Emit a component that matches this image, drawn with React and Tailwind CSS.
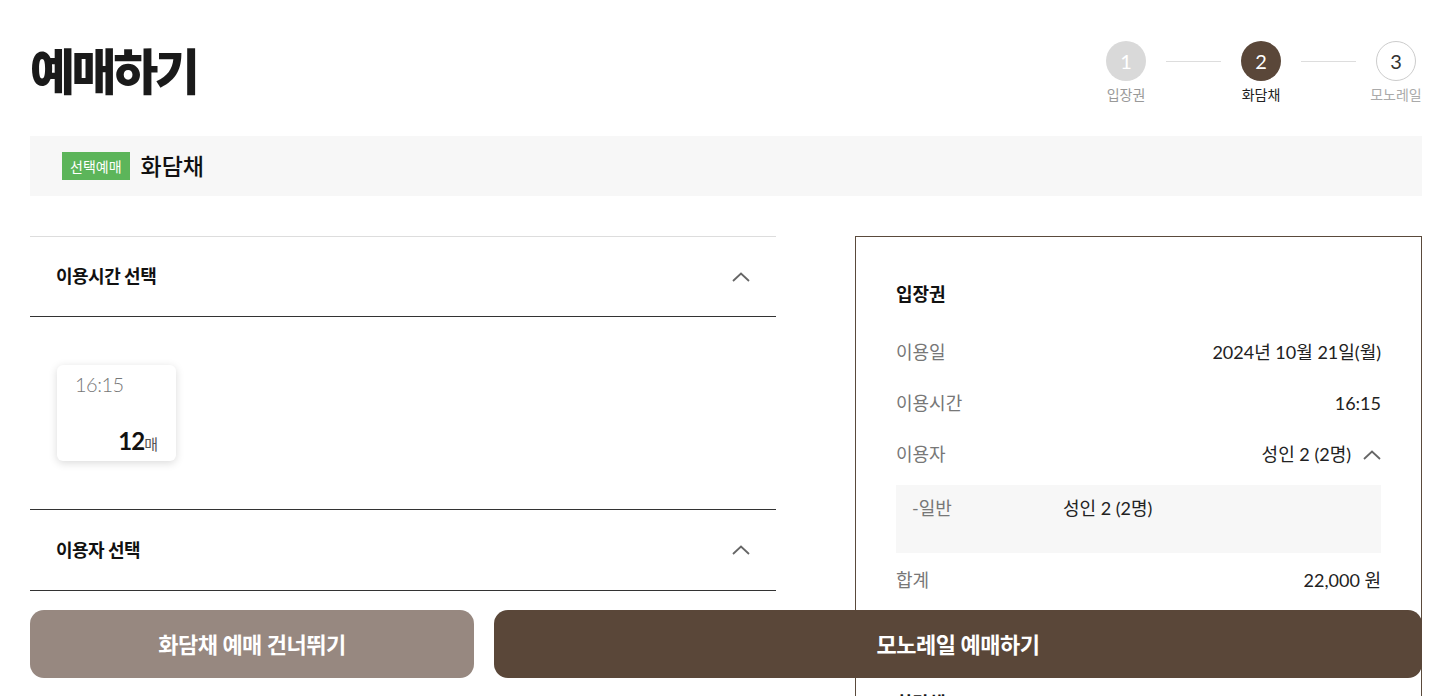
import React from 'react';

const font = { fontFamily: "Lato, 'Noto Sans CJK KR', sans-serif" };

const ChevronUp = ({ className }) => (
  <svg className={className} width="18" height="10" viewBox="0 0 18 10" fill="none">
    <path d="M1 9L9 1.5L17 9" stroke="#666" strokeWidth="1.8" />
  </svg>
);

const Step = ({ num, label, state }) => {
  const circle =
    state === 'done'
      ? 'bg-[#d9d9d9] text-white'
      : state === 'active'
      ? 'bg-[#5a4739] text-white'
      : 'bg-white border border-[#cccccc] text-[#333]';
  const text =
    state === 'done' ? 'text-[#999]' : state === 'active' ? 'text-[#222]' : 'text-[#aaa]';
  return (
    <div className="flex flex-col items-center w-10">
      <div className={`w-10 h-10 rounded-full flex items-center justify-center text-[20px] ${circle}`}>
        {num}
      </div>
      <span className={`mt-[6px] text-[14px] leading-[16px] whitespace-nowrap ${text}`}>{label}</span>
    </div>
  );
};

const Row = ({ label, children }) => (
  <div className="flex items-center justify-between h-[51px]">
    <span className="text-[18px] text-[#777]">{label}</span>
    <div className="flex items-center text-[18px] text-[#222]">{children}</div>
  </div>
);

export default function App() {
  return (
    <div className="bg-white min-h-screen pl-[30px] pr-[17px] pb-[120px]" style={font}>
      {/* title + stepper */}
      <div className="flex items-start justify-between h-[136px]">
        <h1
          className="mt-[44px] text-[49px] leading-none font-black text-[#1a1a1a] tracking-[-3.5px]"
          style={{ fontFamily: "'Noto Sans CJK KR', sans-serif" }}
        >
          예매하기
        </h1>
        <div className="flex items-start mt-[41px] mr-[6px]">
          <Step num="1" label="입장권" state="done" />
          <div className="w-[55px] h-px bg-[#ddd] mt-[20px] mx-[20px]" />
          <Step num="2" label="화담채" state="active" />
          <div className="w-[55px] h-px bg-[#ddd] mt-[20px] mx-[20px]" />
          <Step num="3" label="모노레일" state="todo" />
        </div>
      </div>

      {/* selected bar */}
      <div className="h-[60px] bg-[#f7f7f7] flex items-center pl-[32px]">
        <span className="bg-[#5cb55a] text-white text-[14px] h-[28px] px-[8px] flex items-center">선택예매</span>
        <span className="ml-[11px] text-[23px] font-medium text-[#111]">화담채</span>
      </div>

      <div className="flex justify-between mt-[40px]">
        {/* left */}
        <div className="w-[746px]">
          <div className="border-t border-[#dddddd] border-b border-b-[#333] h-[81px] flex items-center justify-between pl-[26px] pr-[26px]">
            <span className="text-[18px] font-bold text-[#111] tracking-[-0.5px]">이용시간 선택</span>
            <ChevronUp />
          </div>
          <div className="pt-[48px] pb-[48px] pl-[27px]">
            <div className="w-[119px] h-[96px] rounded-[6px] bg-white shadow-[0_2px_8px_rgba(0,0,0,0.15)] flex flex-col justify-between px-[18px] pt-[4px] pb-[2px]">
              <span className="text-[20px] font-light text-[#777] tracking-[-0.5px]">16:15</span>
              <span className="self-end text-[#111]">
                <span className="text-[24px] font-bold tracking-[-1px]">12</span>
                <span className="text-[15px] text-[#555]">매</span>
              </span>
            </div>
          </div>
          <div className="border-t border-[#333] border-b h-[82px] flex items-center justify-between pl-[26px] pr-[26px]">
            <span className="text-[18px] font-bold text-[#111] tracking-[-0.5px]">이용자 선택</span>
            <ChevronUp />
          </div>
          <div className="h-[300px]" />
        </div>

        {/* right summary */}
        <div className="w-[567px] border border-[#5a4a3c] px-[40px] pt-[44px] pb-[40px]">
          <div className="text-[18px] font-bold text-[#111] mb-[19px]">입장권</div>
          <Row label="이용일">2024년 10월 21일(월)</Row>
          <Row label="이용시간">16:15</Row>
          <Row label="이용자">
            성인 2 (2명)
            <ChevronUp className="ml-[12px]" />
          </Row>
          <div className="mt-[5px] bg-[#f7f7f7] h-[68px] flex items-start pt-[10px] pl-[16px] text-[18px]">
            <span className="w-[151px] text-[#777]">-일반</span>
            <span className="text-[#222]">성인 2 (2명)</span>
          </div>
          <div className="mt-[2px]">
            <Row label="합계">22,000 원</Row>
          </div>
          <div className="h-[84px]" />
          <div className="text-[18px] font-bold text-[#111] mb-[19px]">화담채</div>
          <Row label="이용일">2024년 10월 21일(월)</Row>
          <Row label="이용시간">16:15</Row>
          <Row label="합계">0 원</Row>
        </div>
      </div>

      {/* fixed bottom buttons */}
      <div className="fixed left-[30px] right-[17px] bottom-[18px] flex gap-[20px]">
        <button className="w-[444px] h-[68px] rounded-[14px] bg-[#978880] text-white text-[22px] font-bold tracking-[-0.5px]">
          화담채 예매 건너뛰기
        </button>
        <button className="flex-1 h-[68px] rounded-[14px] bg-[#5a4739] text-white text-[22px] font-bold tracking-[-0.5px]">
          모노레일 예매하기
        </button>
      </div>
    </div>
  );
}
